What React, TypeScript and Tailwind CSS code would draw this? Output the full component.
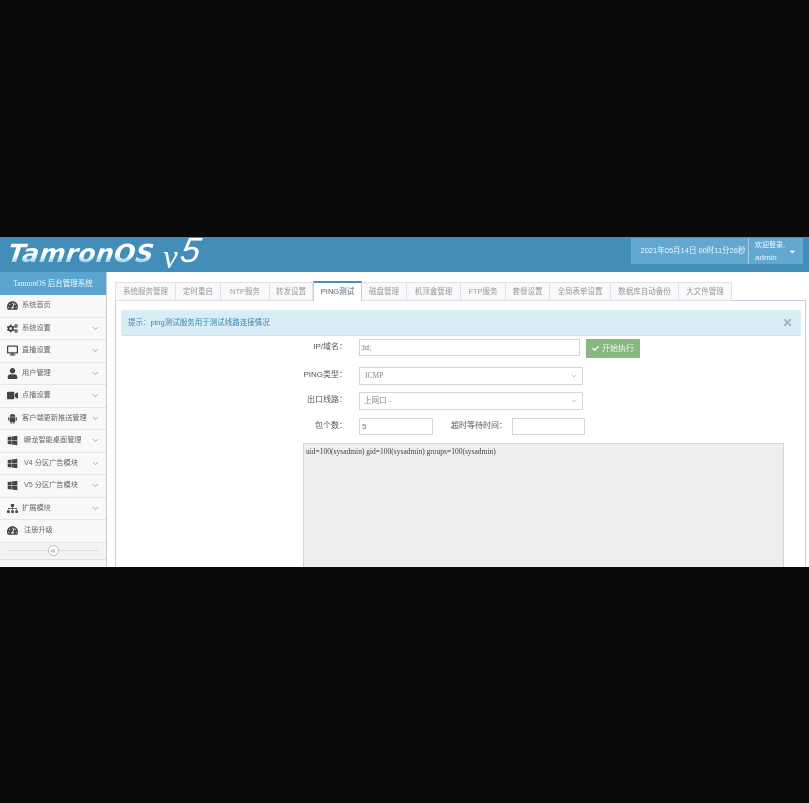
import { ChevronDown } from "lucide-react";
import type { IconType } from "react-icons";
import {
  FaAngleDoubleLeft,
  FaCaretDown,
  FaCheck,
  FaCogs,
  FaDesktop,
  FaSitemap,
  FaTachometerAlt,
  FaTimes,
  FaUser,
  FaVideo,
  FaWindows,
} from "react-icons/fa";

const cjk = "font-['Liberation_Sans','Noto_Sans_CJK_SC',sans-serif]";

// full-body robot, the package's FaAndroid only has the head
function AndroidIcon({ className }: { className?: string }) {
  return (
    <svg viewBox="0 0 16 16" fill="currentColor" className={className} width="1em" height="1em">
      <path d="M4 5.6a4 4 0 0 1 8 0z" />
      <path d="M4 6.2h8v6.2a1 1 0 0 1-1 1H5a1 1 0 0 1-1-1z" />
      <rect x="1.6" y="6.2" width="1.7" height="5" rx="0.85" />
      <rect x="12.7" y="6.2" width="1.7" height="5" rx="0.85" />
      <rect x="5.2" y="13" width="1.7" height="2.6" rx="0.85" />
      <rect x="9.1" y="13" width="1.7" height="2.6" rx="0.85" />
    </svg>
  );
}

type MenuItem = { label: string; icon: IconType | typeof AndroidIcon; arrow?: boolean; wide?: boolean };

const menu: MenuItem[] = [
  { label: "系统首页", icon: FaTachometerAlt },
  { label: "系统设置", icon: FaCogs, arrow: true },
  { label: "直播设置", icon: FaDesktop, arrow: true },
  { label: "用户管理", icon: FaUser, arrow: true },
  { label: "点播设置", icon: FaVideo, arrow: true },
  { label: "客户端更新推送管理", icon: AndroidIcon, arrow: true },
  { label: "瞬龙智能桌面管理", icon: FaWindows, arrow: true, wide: true },
  { label: "V4 分区广告模块", icon: FaWindows, arrow: true, wide: true },
  { label: "V5 分区广告模块", icon: FaWindows, arrow: true, wide: true },
  { label: "扩展模块", icon: FaSitemap, arrow: true },
  { label: "注册升级", icon: FaTachometerAlt, wide: true },
];

const tabs = [
  { label: "系统服务管理", width: "w-[61px]" },
  { label: "定时重启", width: "w-[45px]" },
  { label: "NTP服务", width: "w-[49px]" },
  { label: "转发设置", width: "w-[43px]" },
  { label: "PING测试", width: "w-[49px]", active: true },
  { label: "磁盘管理", width: "w-[45px]" },
  { label: "机顶盒管理", width: "w-[54px]" },
  { label: "FTP服务", width: "w-[45px]" },
  { label: "套餐设置", width: "w-[44px]" },
  { label: "全局表单设置", width: "w-[61px]" },
  { label: "数据库自动备份", width: "w-[68px]" },
  { label: "大文件管理", width: "w-[53px]" },
];

function Header() {
  return (
    <header className="h-[35px] shrink-0 bg-[#438eb9] flex items-start justify-between">
      <div className="flex items-start pl-[8px]">
        <span className="mt-[3px] font-['DejaVu_Sans'] italic font-bold text-[25px] leading-[28px] tracking-[0.3px] text-transparent bg-clip-text bg-gradient-to-b from-white from-55% to-[#2f9fe6] -skew-x-[8deg]">
          TamronOS
        </span>
        <span className="mt-[8px] ml-[9px] font-['Liberation_Serif'] italic text-white text-[33px] leading-[24px]">v</span>
        <span className="ml-[3px] font-['Liberation_Sans'] italic text-white text-[35px] leading-[26px] -skew-x-[10deg]">5</span>
      </div>
      <div className={`flex items-stretch h-[26px] mt-px mr-[6px] bg-[#62a8d1] text-[#eef6fb] ${cjk}`}>
        <div className="w-[117px] flex items-center justify-center text-[7.5px] pl-[7px]">2021年05月14日 00时11分26秒</div>
        <div className="w-[55px] border-l border-[#a6cde4] pl-[6px] flex items-center justify-between pr-[6px]">
          <div className="flex flex-col text-[7px] leading-[12px] gap-[1px]">
            <span>欢迎登录,</span>
            <span className="text-[8px]">admin</span>
          </div>
          <FaCaretDown className="text-[9px]" />
        </div>
      </div>
    </header>
  );
}

function Sidebar() {
  return (
    <aside className={`w-[107px] shrink-0 bg-[#f8f8f8] border-r border-[#ccc] flex flex-col ${cjk}`}>
      <div className="h-[23px] shrink-0 bg-[#5ba4d0] text-[#eef6fb] text-[7.5px] flex items-center justify-center font-['Liberation_Serif','Noto_Sans_CJK_SC',serif]">
        TamronOS 后台管理系统
      </div>
      {menu.map((item) => (
        <div
          key={item.label}
          className="h-[22.5px] shrink-0 bg-[#f8f8f8] border-b border-[#e5e5e5] flex items-center text-[#666] text-[7.2px]"
        >
          <span className="w-[22px] shrink-0 flex justify-center pl-[2px]">
            <item.icon className="text-[11px] text-[#444]" />
          </span>
          <span className={item.wide ? "ml-[2px] whitespace-nowrap" : "whitespace-nowrap"}>{item.label}</span>
          {item.arrow && <ChevronDown className="ml-auto mr-[6px] shrink-0 text-[#666]" size={9} strokeWidth={1.5} />}
        </div>
      ))}
      <div className="h-[17px] shrink-0 bg-[#f3f3f3] border-b border-[#e0e0e0] flex items-center justify-center px-[8px] relative">
        <div className="w-full h-px bg-[#ddd]" />
        <span className="absolute w-[11px] h-[11px] rounded-full bg-white border border-[#bbb] flex items-center justify-center">
          <FaAngleDoubleLeft className="text-[6px] text-[#aaa]" />
        </span>
      </div>
    </aside>
  );
}

function Tabs() {
  return (
    <div className={`flex h-[20px] text-[7.5px] ${cjk}`}>
      {tabs.map((tab) =>
        tab.active ? (
          <div
            key={tab.label}
            className={`${tab.width} shrink-0 h-[20px] relative z-10 bg-white border-x border-[#c5d0dc] border-t-2 border-t-[#4c8fbd] text-[#576373] flex items-center justify-center`}
          >
            {tab.label}
          </div>
        ) : (
          <div
            key={tab.label}
            className={`${tab.width} shrink-0 h-[19px] mt-px bg-[#f9f9f9] border border-l-0 first:border-l border-[#dde3ea] text-[#999] flex items-center justify-center`}
          >
            {tab.label}
          </div>
        ),
      )}
    </div>
  );
}

function Field({ label, children }: { label: string; children: React.ReactNode }) {
  return (
    <div className="flex items-start">
      <label className="w-[44px] shrink-0 mr-[12px] text-right text-[8px] leading-[16px] text-[#555] whitespace-nowrap flex justify-end">
        {label}
      </label>
      {children}
    </div>
  );
}

function SelectBox({ value }: { value: React.ReactNode }) {
  return (
    <div className="w-[224px] h-[18px] bg-white border border-[#d5d5d5] flex items-center justify-between pl-[4px] pr-[4px] text-[7.5px] text-[#888]">
      {value}
      <ChevronDown size={8} strokeWidth={1.5} className="text-[#888]" />
    </div>
  );
}

function PingForm() {
  return (
    <div className={`ml-[187px] w-[481px] mt-[3px] ${cjk}`}>
      <Field label="IP/域名：">
        <div className="w-[221px] h-[17px] bg-white border border-[#d5d5d5] pl-[1px] text-[7.5px] leading-[15px] text-[#777]">;ld;</div>
        <button className="ml-[6px] w-[54px] h-[19px] bg-[#87b87f] rounded-[1px] text-[#eef6ec] text-[8px] flex items-center justify-center gap-[3px]">
          <FaCheck className="text-[7px]" />
          开始执行
        </button>
      </Field>
      <div className="mt-[9px]">
        <Field label="PING类型：">
          <SelectBox value={<span className="font-['Liberation_Serif'] pl-[1px]">ICMP</span>} />
        </Field>
      </div>
      <div className="mt-[7px]">
        <Field label="出口线路：">
          <SelectBox value={<span>上网口 -</span>} />
        </Field>
      </div>
      <div className="mt-[8px]">
        <Field label="包个数：">
          <div className="w-[74px] h-[17px] bg-white border border-[#d5d5d5] pl-[2px] text-[8px] leading-[15px] text-[#777]">5</div>
          <span className="w-[74px] text-right text-[8px] leading-[16px] text-[#555]">超时等待时间：</span>
          <div className="ml-[5px] w-[73px] h-[17px] bg-white border border-[#d5d5d5]" />
        </Field>
      </div>
      <div className="mt-[8px] h-[200px] bg-[#eeeeee] border border-[#d5d5d5] pl-[2px] pt-[2px] font-['Liberation_Serif'] text-[7.5px] leading-[11px] text-[#444]">
        uid=100(sysadmin) gid=100(sysadmin) groups=100(sysadmin)
      </div>
    </div>
  );
}

function Main() {
  return (
    <main className="flex-1 min-w-0 bg-white pl-[8px] pr-[3px] pt-[9px] overflow-hidden">
      <Tabs />
      <div className="border border-[#c5d0dc] -mt-px h-[300px]">
        <div className={`relative ml-[5px] mr-[4px] mt-[9px] h-[26px] rounded-[2px] bg-[#d9edf7] border-b border-[#bce8f1] flex items-center pl-[7px] text-[7.5px] text-[#3a87ad] ${cjk}`}>
          提示：ping测试服务用于测试线路连接情况
          <FaTimes className="absolute right-[8px] text-[11px] text-[#aab4bb]" />
        </div>
        <PingForm />
      </div>
    </main>
  );
}

export default function App() {
  return (
    <div className="h-[803px] w-[809px] bg-[#0a0a0a] flex flex-col justify-center overflow-hidden">
      <div className="h-[330px] flex flex-col blur-[0.4px] will-change-transform">
        <Header />
        <div className="flex flex-1 min-h-0 overflow-hidden">
          <Sidebar />
          <Main />
        </div>
      </div>
    </div>
  );
}
